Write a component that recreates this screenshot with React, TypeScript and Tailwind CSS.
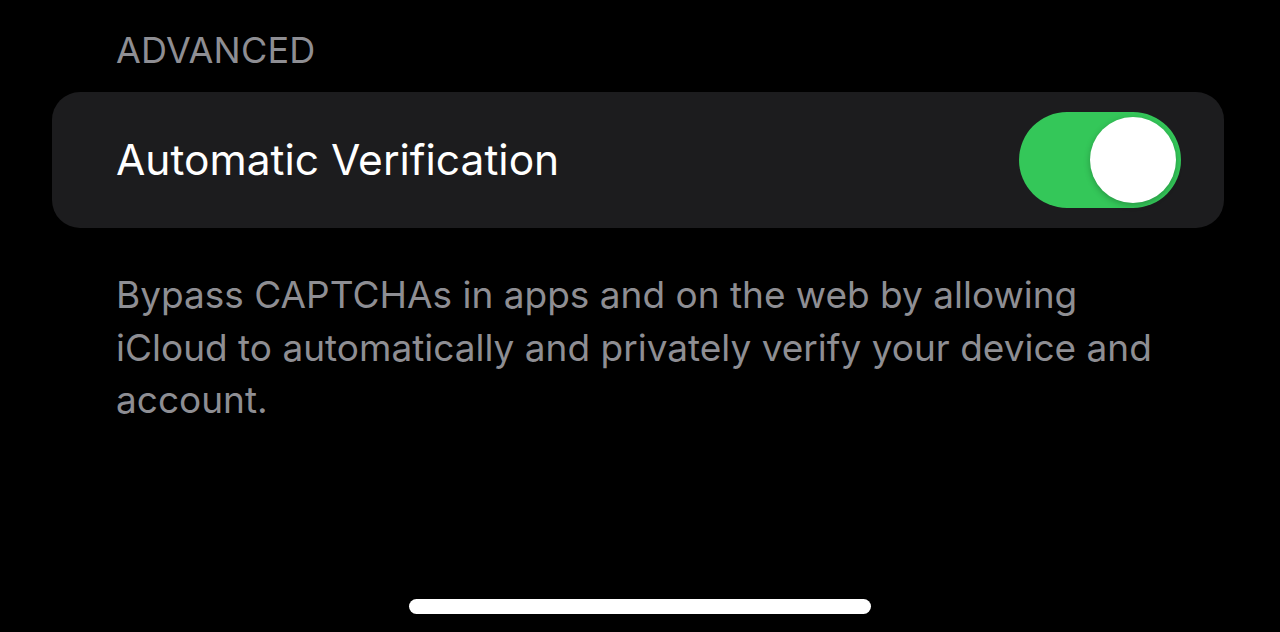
export default function App() {
  return (
    <div
      className="w-full h-[632px] bg-black flex flex-col overflow-hidden"
      style={{ fontFamily: 'Inter, "Noto Sans", "Liberation Sans", sans-serif' }}
    >
      <div className="pl-[116px] pt-[28px] text-[36px] leading-[44px] text-[#8e8e93] tracking-[0.2px]">
        ADVANCED
      </div>
      <div className="ml-[52px] mr-[56px] mt-[20px] h-[136px] rounded-[28px] bg-[#1c1c1e] flex items-center pl-[64px] pr-[43px]">
        <div className="flex-1 text-white text-[42.5px] leading-[52px]">Automatic Verification</div>
        <div className="w-[162px] h-[96px] rounded-full bg-[#34c759] p-[5px] flex justify-end">
          <div className="w-[86px] h-[86px] rounded-full bg-white shadow-[0_2px_6px_rgba(0,0,0,0.25)]" />
        </div>
      </div>
      <div className="pl-[116px] mt-[41px] text-[37px] leading-[52.5px] text-[#8e8e93]">
        <div>Bypass CAPTCHAs in apps and on the web by allowing</div>
        <div>iCloud to automatically and privately verify your device and</div>
        <div>account.</div>
      </div>
      <div className="mt-auto mb-[18px] flex justify-center">
        <div className="w-[462px] h-[15px] rounded-full bg-white" />
      </div>
    </div>
  );
}
